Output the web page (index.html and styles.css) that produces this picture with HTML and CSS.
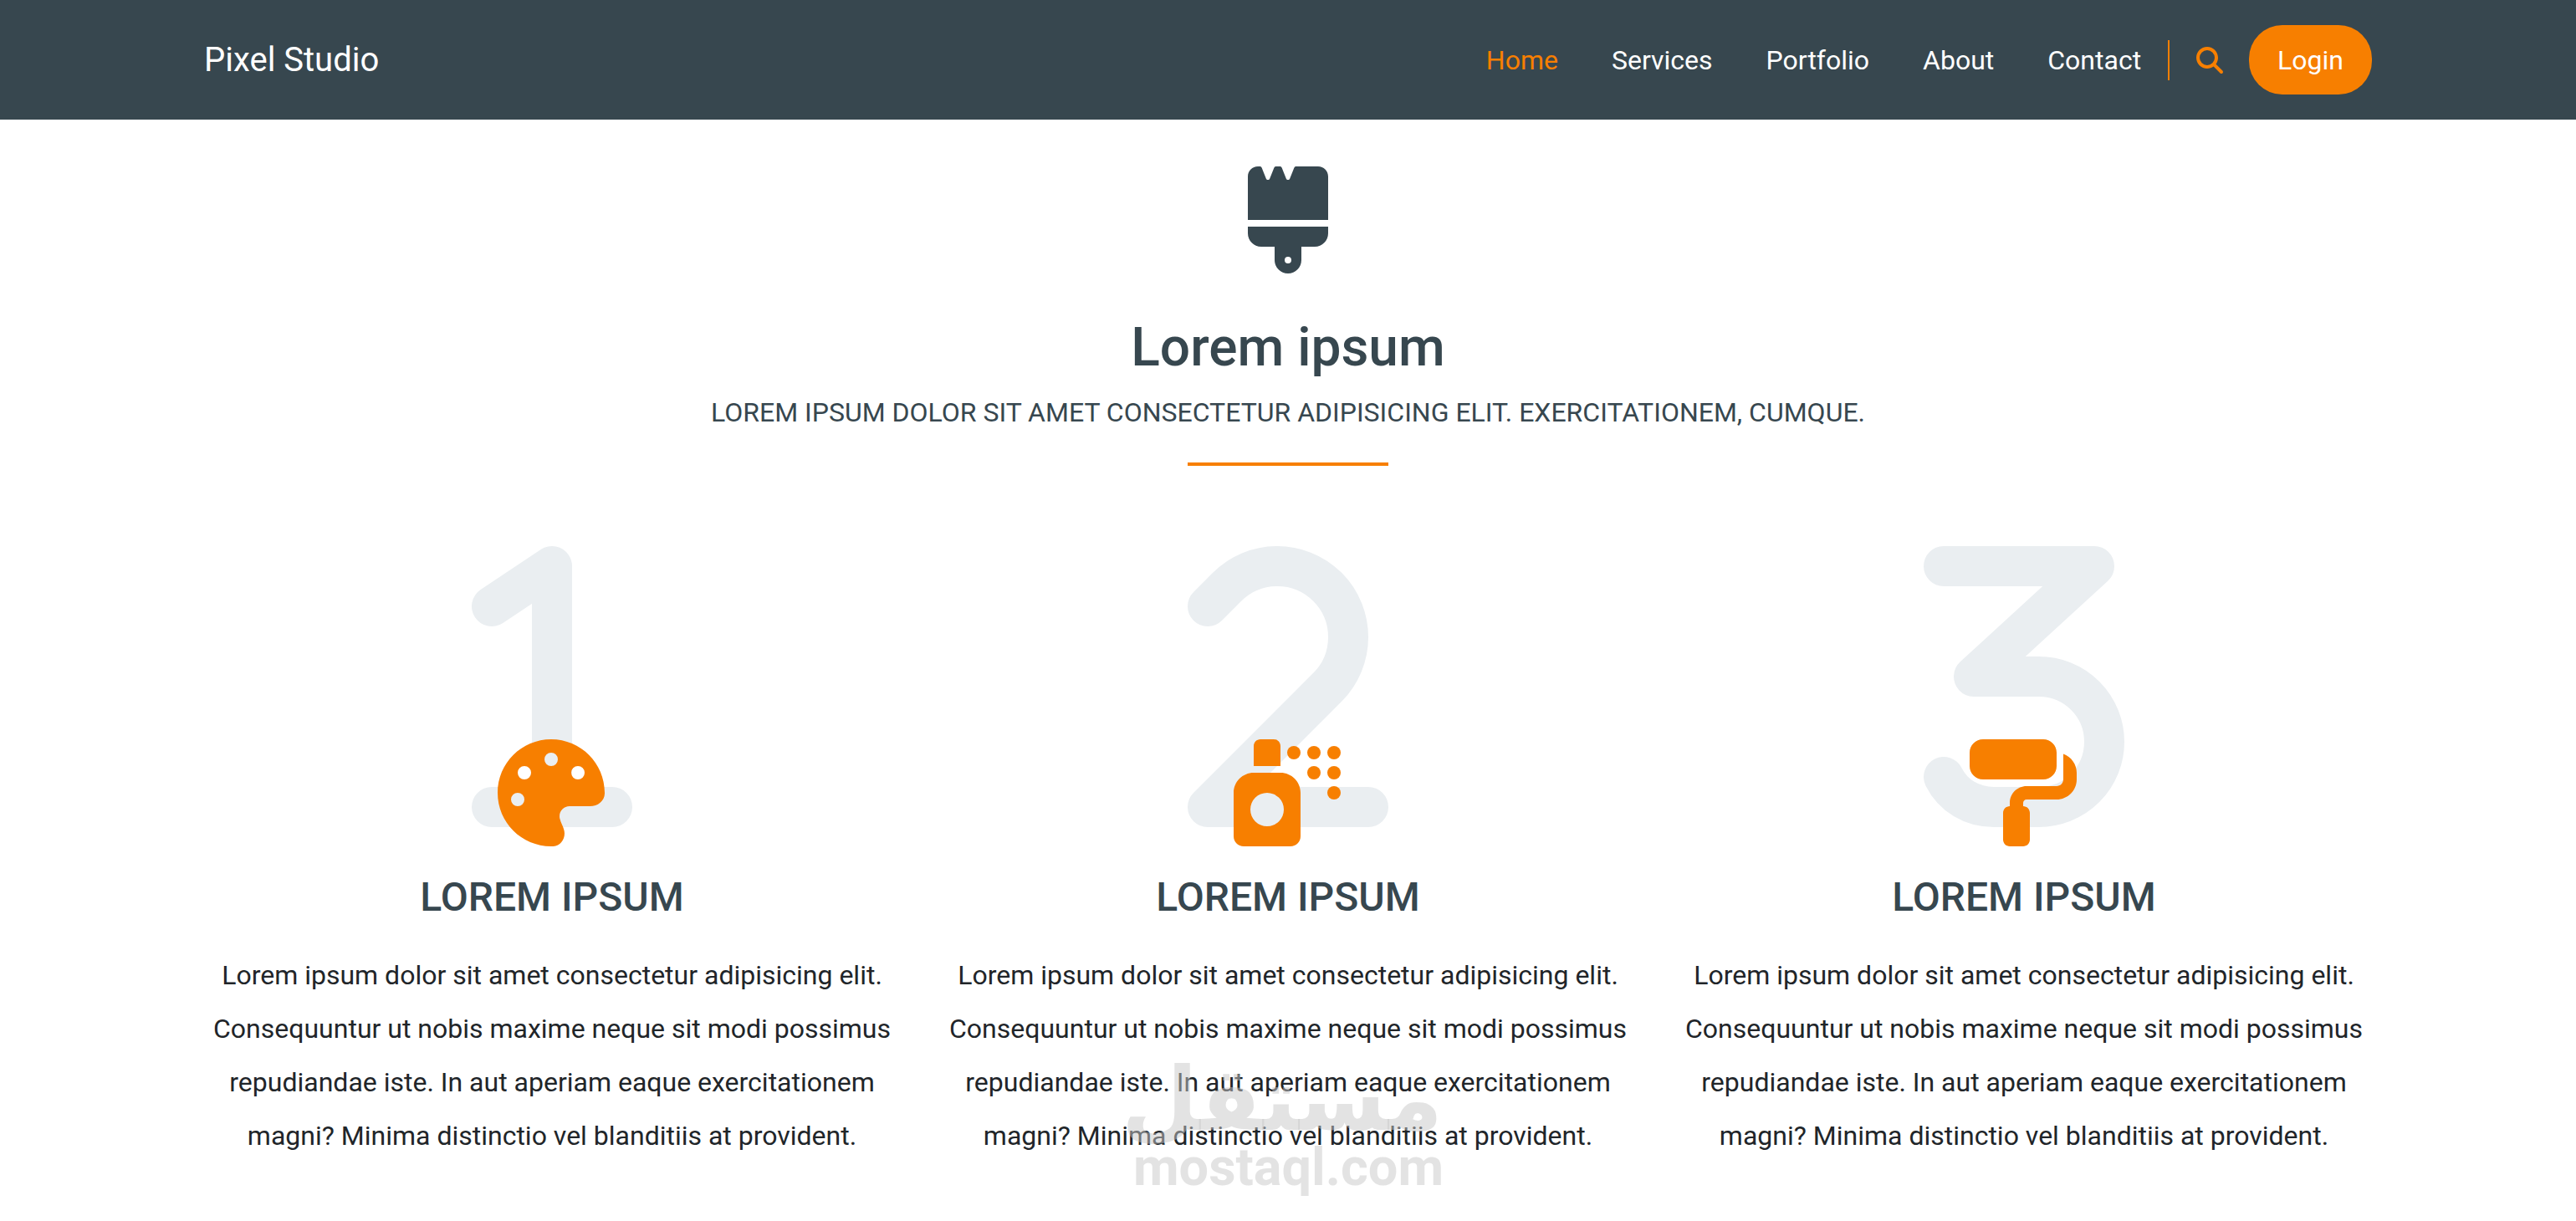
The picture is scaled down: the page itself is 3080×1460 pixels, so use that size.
FILE: index.html
```html
<!DOCTYPE html>
<html lang="en">
<head>
<meta charset="utf-8">
<title>Pixel Studio</title>
<link rel="stylesheet" href="styles.css">
</head>
<body>
<header class="topbar">
  <div class="container topbar-inner">
    <a class="brand" href="#">Pixel Studio</a>
    <nav class="nav">
      <a class="nav-link active" href="#">Home</a>
      <a class="nav-link" href="#">Services</a>
      <a class="nav-link" href="#">Portfolio</a>
      <a class="nav-link" href="#">About</a>
      <a class="nav-link" href="#">Contact</a>
      <span class="nav-divider"></span>
      <svg class="search-icon" viewBox="0 0 512 512"><path d="M416 208c0 45.900-14.900 88.300-40 122.700L502.600 457.400c12.500 12.500 12.500 32.800 0 45.300s-32.800 12.500-45.300 0L330.700 376c-34.400 25.200-76.800 40-122.700 40C93.100 416 0 322.900 0 208S93.100 0 208 0S416 93.100 416 208zM208 352a144 144 0 1 0 0-288 144 144 0 1 0 0 288z"/></svg>
      <a class="login" href="#">Login</a>
    </nav>
  </div>
</header>
<main class="container">
  <section class="intro">
    <svg class="brush-icon" viewBox="0 0 384 512"><path d="M162.400 6c-1.500-3.600-5-6-8.900-6h-19c-3.900 0-7.500 2.400-8.900 6L104.900 57.700c-3.200 8-14.600 8-17.800 0L66.400 6c-1.500-3.600-5-6-8.900-6H48C21.500 0 0 21.500 0 48V224v22.400V256H9.600 374.400 384v-9.600V224 48c0-26.500-21.500-48-48-48H230.500c-3.900 0-7.500 2.400-8.900 6L200.900 57.700c-3.200 8-14.600 8-17.800 0L162.400 6zM0 288v32c0 35.300 28.700 64 64 64h64v64c0 35.300 28.700 64 64 64s64-28.700 64-64V384h64c35.300 0 64-28.700 64-64V288H0zM192 432a16 16 0 1 1 0 32 16 16 0 1 1 0-32z"/></svg>
    <h1 class="title">Lorem ipsum</h1>
    <p class="subtitle">LOREM IPSUM DOLOR SIT AMET CONSECTETUR ADIPISICING ELIT. EXERCITATIONEM, CUMQUE.</p>
    <div class="rule"></div>
  </section>
  <section class="steps">
    <article class="step">
      <div class="visual">
        <svg class="digit digit-narrow" viewBox="0 0 256 512"><path d="M32 128L128 64V448M32 448H224"/></svg>
        <svg class="step-icon" viewBox="0 0 512 512"><path d="M512 256c0 .9 0 1.800 0 2.700c-.4 36.500-33.600 61.300-70.100 61.300H344c-26.500 0-48 21.500-48 48c0 3.400 .4 6.700 1 9.900c2.100 10.200 6.500 20 10.800 29.900c6.100 13.800 12.100 27.500 12.100 42c0 31.800-21.600 60.700-53.400 62c-3.500 .1-7 .2-10.600 .2C114.600 512 0 397.400 0 256S114.600 0 256 0S512 114.600 512 256zM128 288a32 32 0 1 0 -64 0 32 32 0 1 0 64 0zm0-96a32 32 0 1 0 0-64 32 32 0 1 0 0 64zM288 96a32 32 0 1 0 -64 0 32 32 0 1 0 64 0zm96 96a32 32 0 1 0 0-64 32 32 0 1 0 0 64z"/></svg>
      </div>
      <h3 class="step-title">LOREM IPSUM</h3>
      <p class="step-text">Lorem ipsum dolor sit amet consectetur adipisicing elit. Consequuntur ut nobis maxime neque sit modi possimus repudiandae iste. In aut aperiam eaque exercitationem magni? Minima distinctio vel blanditiis at provident.</p>
    </article>
    <article class="step">
      <div class="visual">
        <svg class="digit digit-wide" viewBox="0 0 320 512"><path d="M32 128L62.900 97.100A113 113 0 0 1 142.900 64A113.100 113.100 0 0 1 256 177.100C256 207 244 236 222.900 257.100L32 448H288"/></svg>
        <svg class="step-icon" viewBox="0 0 512 512"><path d="M128 0h64c17.700 0 32 14.300 32 32V128H96V32c0-17.700 14.300-32 32-32zM0 256c0-53 43-96 96-96h128c53 0 96 43 96 96V464c0 26.500-21.500 48-48 48H48c-26.500 0-48-21.500-48-48V256zm240 80a80 80 0 1 0 -160 0 80 80 0 1 0 160 0z"/><circle cx="288" cy="64" r="32"/><circle cx="384" cy="64" r="32"/><circle cx="480" cy="64" r="32"/><circle cx="384" cy="160" r="32"/><circle cx="480" cy="160" r="32"/><circle cx="480" cy="256" r="32"/></svg>
      </div>
      <h3 class="step-title">LOREM IPSUM</h3>
      <p class="step-text">Lorem ipsum dolor sit amet consectetur adipisicing elit. Consequuntur ut nobis maxime neque sit modi possimus repudiandae iste. In aut aperiam eaque exercitationem magni? Minima distinctio vel blanditiis at provident.</p>
    </article>
    <article class="step">
      <div class="visual">
        <svg class="digit digit-wide" viewBox="0 0 320 512"><path d="M32 64H272L80 240H184A104 104 0 0 1 184 448H112C77 448 47 430 32 400"/></svg>
        <svg class="step-icon" viewBox="0 0 512 512"><path d="M0 64C0 28.700 28.700 0 64 0H352c35.300 0 64 28.700 64 64v64c0 35.300-28.700 64-64 64H64c-35.300 0-64-28.700-64-64V64zM160 352c0-17.700 14.300-32 32-32V304c0-44.200 35.800-80 80-80H416c17.700 0 32-14.300 32-32V160 69.500c37.300 13.200 64 48.700 64 90.500v32c0 53-43 96-96 96H272c-8.800 0-16 7.200-16 16v16c17.700 0 32 14.300 32 32V480c0 17.700-14.300 32-32 32H192c-17.700 0-32-14.300-32-32V352z"/></svg>
      </div>
      <h3 class="step-title">LOREM IPSUM</h3>
      <p class="step-text">Lorem ipsum dolor sit amet consectetur adipisicing elit. Consequuntur ut nobis maxime neque sit modi possimus repudiandae iste. In aut aperiam eaque exercitationem magni? Minima distinctio vel blanditiis at provident.</p>
    </article>
  </section>
</main>
<div class="watermark">
  <div class="wm-ar" lang="ar" dir="rtl">مستقل</div>
  <div class="wm-en">mostaql.com</div>
</div>
</body>
</html>
```
FILE: styles.css
```css
* { box-sizing: border-box; }
html, body { margin: 0; padding: 0; }
body {
  position: relative;
  height: 1460px;
  overflow: hidden;
  background: #fff;
  color: #212529;
  font-family: Roboto, "Liberation Sans", sans-serif;
  font-size: 32px;
  line-height: 1.5;
}
a { text-decoration: none; color: inherit; }
.container { width: 2640px; margin: 0 auto; }
.topbar { background: #37474f; height: 143px; }
.topbar-inner {
  height: 100%;
  padding: 0 24px;
  display: flex;
  align-items: center;
  justify-content: space-between;
}
.brand { color: #fff; font-size: 40px; line-height: 60px; }
.nav { display: flex; align-items: center; }
.nav-link { color: #fff; padding: 0 32px; line-height: 48px; }
.nav-link.active { color: #f77f00; }
.nav-divider { width: 2px; height: 48px; background: #f77f00; }
.search-icon { width: 32px; height: 32px; margin: 0 31px 0 32px; fill: #f77f00; }
.login {
  background: #f77f00;
  color: #fff;
  padding: 17.500px 34px;
  line-height: 48px;
  border-radius: 40px;
}
.intro { display: flex; flex-direction: column; align-items: center; padding-top: 56px; }
.brush-icon { width: 96px; height: 128px; fill: #37474f; display: block; }
.title { margin: 51px 0 0; font-size: 64px; line-height: 76px; font-weight: 500; color: #37474f; }
.subtitle { margin: 15px 0 0; line-height: 48px; color: #37474f; }
.rule { width: 240px; height: 4px; background: #f77f00; margin-top: 36px; }
.steps { display: grid; grid-template-columns: repeat(3, 1fr); margin-top: 72px; }
.step { padding: 0 24px; text-align: center; }
.visual { position: relative; display: flex; justify-content: center; height: 384px; }
.digit { height: 384px; fill: none; stroke: #eaeef1; stroke-width: 64; stroke-linecap: round; stroke-linejoin: round; }
.digit-narrow { width: 192px; }
.digit-wide { width: 240px; }
.step-icon {
  position: absolute;
  left: 50%;
  bottom: 1px;
  width: 128px;
  height: 128px;
  margin-left: -65px;
  fill: #f77f00;
}
.step-title { margin: 31px 0 0; font-size: 48px; line-height: 58px; font-weight: 500; color: #37474f; }
.step-text { margin: 32px 0 0; line-height: 64px; }
.watermark {
  position: absolute;
  left: 1355px;
  top: 1262px;
  width: 370px;
  text-align: center;
  color: rgba(200, 200, 200, .5);
  font-weight: 700;
  pointer-events: none;
}
.wm-ar { font-family: "DejaVu Sans", sans-serif; font-size: 105px; line-height: 106px; }
.wm-en { font-family: Roboto, sans-serif; font-size: 63px; line-height: 60px; margin-top: -2px; }
```
